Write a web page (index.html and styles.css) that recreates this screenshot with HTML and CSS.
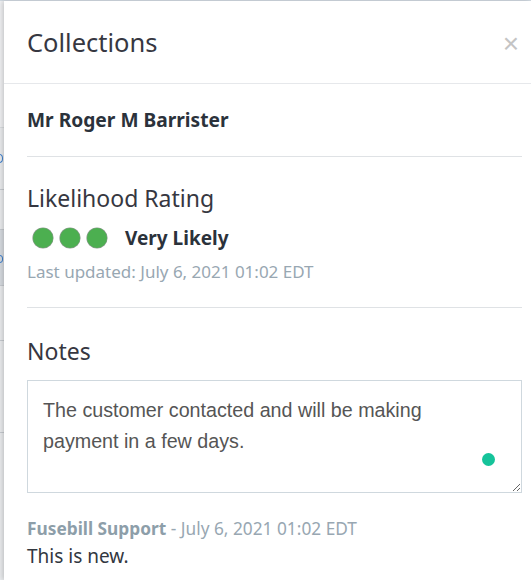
FILE: index.html
```html
<!DOCTYPE html>
<html>
<head>
<meta charset="utf-8">
<link rel="stylesheet" href="styles.css">
</head>
<body>
<div class="app">
  <div class="backdrop">
    <div class="bg-row r1"></div>
    <div class="bg-row r2"><span class="bg-glyph g1"></span></div>
    <div class="bg-row r3"></div>
    <div class="bg-row r4"><span class="bg-glyph g2"></span></div>
    <div class="bg-row r5"></div>
    <div class="bg-row r6"></div>
  </div>
  <aside class="panel">
    <header class="panel-header">
      <h1 class="panel-title">Collections</h1>
      <button class="close-btn" aria-label="Close">×</button>
    </header>
    <div class="panel-body">
      <section class="section customer">
        <div class="customer-name">Mr Roger M Barrister</div>
      </section>
      <section class="section rating">
        <h2 class="section-title">Likelihood Rating</h2>
        <div class="rating-row">
          <span class="dots">
            <span class="dot"></span><span class="dot"></span><span class="dot"></span>
          </span>
          <span class="rating-label">Very Likely</span>
        </div>
        <div class="muted">Last updated: July 6, 2021 01:02 EDT</div>
      </section>
      <section class="section notes">
        <h2 class="section-title">Notes</h2>
        <div class="note-box">
          <textarea class="note-input">The customer contacted and will be making payment in a few days.</textarea>
          <span class="assist-dot"></span>
        </div>
        <div class="note-entry">
          <div class="note-meta"><span class="note-author">Fusebill Support</span> - July 6, 2021 01:02 EDT</div>
          <div class="note-text">This is new.</div>
        </div>
      </section>
    </div>
  </aside>
</div>
</body>
</html>
```

FILE: styles.css
```css
html, body {
  margin: 0;
  padding: 0;
  height: 100%;
  background: #ffffff;
  overflow: hidden;
}

.app {
  display: flex;
  height: 580px;
  border-top: 1px solid #d3dbe3;
  box-sizing: border-box;
  font-family: "Noto Sans", "Open Sans", sans-serif;
}

.backdrop {
  width: 4px;
  flex: none;
  background: #eceef0;
  display: flex;
  flex-direction: column;
  overflow: hidden;
}

.bg-row {
  flex: none;
  border-bottom: 1px solid #c9cdd2;
  position: relative;
}
.r1 { height: 126px; border-bottom-color: #dcdfe2; background: #f2f3f5; }
.r2 { height: 61px; }
.r3 { height: 39px; }
.r4 { height: 55px; background: #d9dde2; }
.r5 { height: 54px; }
.r6 { height: 91px; }

.bg-glyph {
  position: absolute;
  left: -4px;
  width: 5px;
  border: 1.5px solid #3b7fd0;
  border-radius: 50%;
}
.g1 { top: 26px; height: 7px; }
.g2 { top: 25px; height: 6px; border-radius: 3px; }

.panel {
  flex: 1;
  background: #ffffff;
  box-shadow: -2px 0 5px rgba(0, 0, 0, 0.18);
  position: relative;
  display: flex;
  flex-direction: column;
  color: #32373f;
}

.panel-header {
  height: 82px;
  border-bottom: 1px solid #e6e8eb;
  display: flex;
  align-items: center;
  justify-content: space-between;
  padding: 0 12px 0 23px;
  flex: none;
}

.panel-title {
  margin: 0;
  font-size: 25.5px;
  font-weight: 400;
  color: #363741;
  line-height: 34px;
  padding-bottom: 1px;
}

.close-btn {
  border: 0;
  background: none;
  padding: 0;
  font-size: 28px;
  line-height: 1;
  color: #c4c4c4;
  font-family: "Liberation Sans", sans-serif;
  cursor: pointer;
  margin-top: 4px;
}

.panel-body {
  padding: 0 9px 0 23px;
}

.section {
  border-bottom: 1px solid #dfe2e5;
}
.section:last-child { border-bottom: 0; }

.customer {
  padding: 23px 0 23px;
}

.customer-name {
  font-size: 19.2px;
  font-weight: 700;
  color: #2b323b;
  line-height: 26px;
}

.rating {
  padding: 26px 0 23px;
}

.section-title {
  margin: 0;
  font-size: 23px;
  font-weight: 400;
  color: #363741;
  line-height: 30px;
}

.rating-row {
  display: flex;
  align-items: center;
  margin-top: 12px;
  gap: 18px;
}

.dots {
  display: flex;
  gap: 7px;
  padding-left: 6px;
}

.dot {
  width: 20px;
  height: 20px;
  border-radius: 50%;
  background: #4caf50;
  box-shadow: 0 0 0 0.6px #8a9a8c;
}

.rating-label {
  font-size: 19px;
  font-weight: 700;
  color: #2b323b;
  line-height: 26px;
}

.muted {
  margin-top: 9px;
  font-size: 17px;
  color: #98a7b2;
  line-height: 24px;
}

.notes {
  padding: 28px 0 0;
}

.note-box {
  position: relative;
  margin-top: 14px;
}

.note-input {
  display: block;
  width: 100%;
  box-sizing: border-box;
  height: 113px;
  border: 1px solid #cfd8de;
  border-radius: 0;
  padding: 14px 45px 14px 15px;
  font-family: "Liberation Sans", Arial, sans-serif;
  font-size: 19.7px;
  line-height: 31px;
  color: #555555;
  resize: vertical;
  outline: none;
  overflow: hidden;
}

.assist-dot {
  position: absolute;
  right: 27px;
  bottom: 27px;
  width: 13px;
  height: 13px;
  border-radius: 50%;
  background: #15c39a;
}

.note-entry {
  margin-top: 24px;
}

.note-meta {
  font-size: 17.3px;
  color: #98a7b2;
  line-height: 24px;
}

.note-author {
  font-weight: 700;
  color: #8d9ea9;
}

.note-text {
  font-size: 19px;
  color: #32373f;
  line-height: 26px;
  margin-top: 2px;
}
```
